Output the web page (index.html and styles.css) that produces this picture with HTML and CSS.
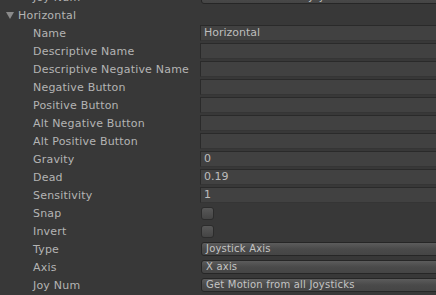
FILE: index.html
```html
<!DOCTYPE html>
<html lang="en">
<head>
  <meta charset="UTF-8" />
  <title>Input Axis - Horizontal</title>
  <link rel="stylesheet" href="styles.css">
</head>
<body>
  <div class="inspector">
    <div class="row">
      <span class="label">Joy Num</span>
      <div class="popup">Get Motion from all Joysticks</div>
    </div>

    <div class="foldout">
      <span class="arrow"></span>
      <span>Horizontal</span>
    </div>

    <div class="row">
      <span class="label">Name</span>
      <div class="field">Horizontal</div>
    </div>
    <div class="row">
      <span class="label">Descriptive Name</span>
      <div class="field"></div>
    </div>
    <div class="row">
      <span class="label">Descriptive Negative Name</span>
      <div class="field"></div>
    </div>
    <div class="row">
      <span class="label">Negative Button</span>
      <div class="field"></div>
    </div>
    <div class="row">
      <span class="label">Positive Button</span>
      <div class="field"></div>
    </div>
    <div class="row">
      <span class="label">Alt Negative Button</span>
      <div class="field"></div>
    </div>
    <div class="row">
      <span class="label">Alt Positive Button</span>
      <div class="field"></div>
    </div>
    <div class="row">
      <span class="label">Gravity</span>
      <div class="field">0</div>
    </div>
    <div class="row">
      <span class="label">Dead</span>
      <div class="field">0.19</div>
    </div>
    <div class="row">
      <span class="label">Sensitivity</span>
      <div class="field">1</div>
    </div>
    <div class="row">
      <span class="label">Snap</span>
      <div class="toggle"></div>
    </div>
    <div class="row">
      <span class="label">Invert</span>
      <div class="toggle"></div>
    </div>
    <div class="row">
      <span class="label">Type</span>
      <div class="popup">Joystick Axis</div>
    </div>
    <div class="row">
      <span class="label">Axis</span>
      <div class="popup">X axis</div>
    </div>
    <div class="row">
      <span class="label">Joy Num</span>
      <div class="popup">Get Motion from all Joysticks</div>
    </div>
  </div>
</body>
</html>
```

FILE: styles.css
```css
/* Unity-style dark inspector */
body {
  margin: 0;
  background: #383838;
  color: #b4b4b4;
  font-family: "DejaVu Sans", sans-serif;
  font-size: 11px;
  overflow: hidden;
}
.inspector {
  margin-top: -12px;
}
.row,
.foldout {
  display: flex;
  align-items: center;
  height: 18px;
}
.row {
  padding-left: 33px;
}
.foldout {
  padding-left: 6px;
  letter-spacing: 0.2px;
}
.arrow {
  width: 0;
  height: 0;
  border-left: 4px solid transparent;
  border-right: 4px solid transparent;
  border-top: 7px solid #8a8a8a;
  margin-right: 4px;
}
.label {
  width: 167px;
  flex: none;
  white-space: nowrap;
  letter-spacing: 0.2px;
}
.field {
  flex: 1;
  height: 14px;
  line-height: 14px;
  margin-right: -6px;
  padding-left: 3px;
  background: #414141;
  border: 1px solid #2a2a2a;
  border-bottom-color: #353535;
  color: #bdbdbd;
}
.toggle {
  width: 11px;
  height: 11px;
  margin-left: 1px;
  border: 1px solid #2c2c2c;
  border-radius: 3px;
  background: linear-gradient(to bottom, #585858, #444444);
}
.popup {
  flex: 1;
  height: 12px;
  line-height: 12px;
  margin-left: 1px;
  margin-right: -6px;
  padding-left: 4px;
  font-size: 10px;
  letter-spacing: 0.2px;
  border: 1px solid #262626;
  border-radius: 3px;
  background: linear-gradient(to bottom, #5c5c5c, #4a4a4a 50%, #454545);
  color: #c4c4c4;
  white-space: nowrap;
}
```
